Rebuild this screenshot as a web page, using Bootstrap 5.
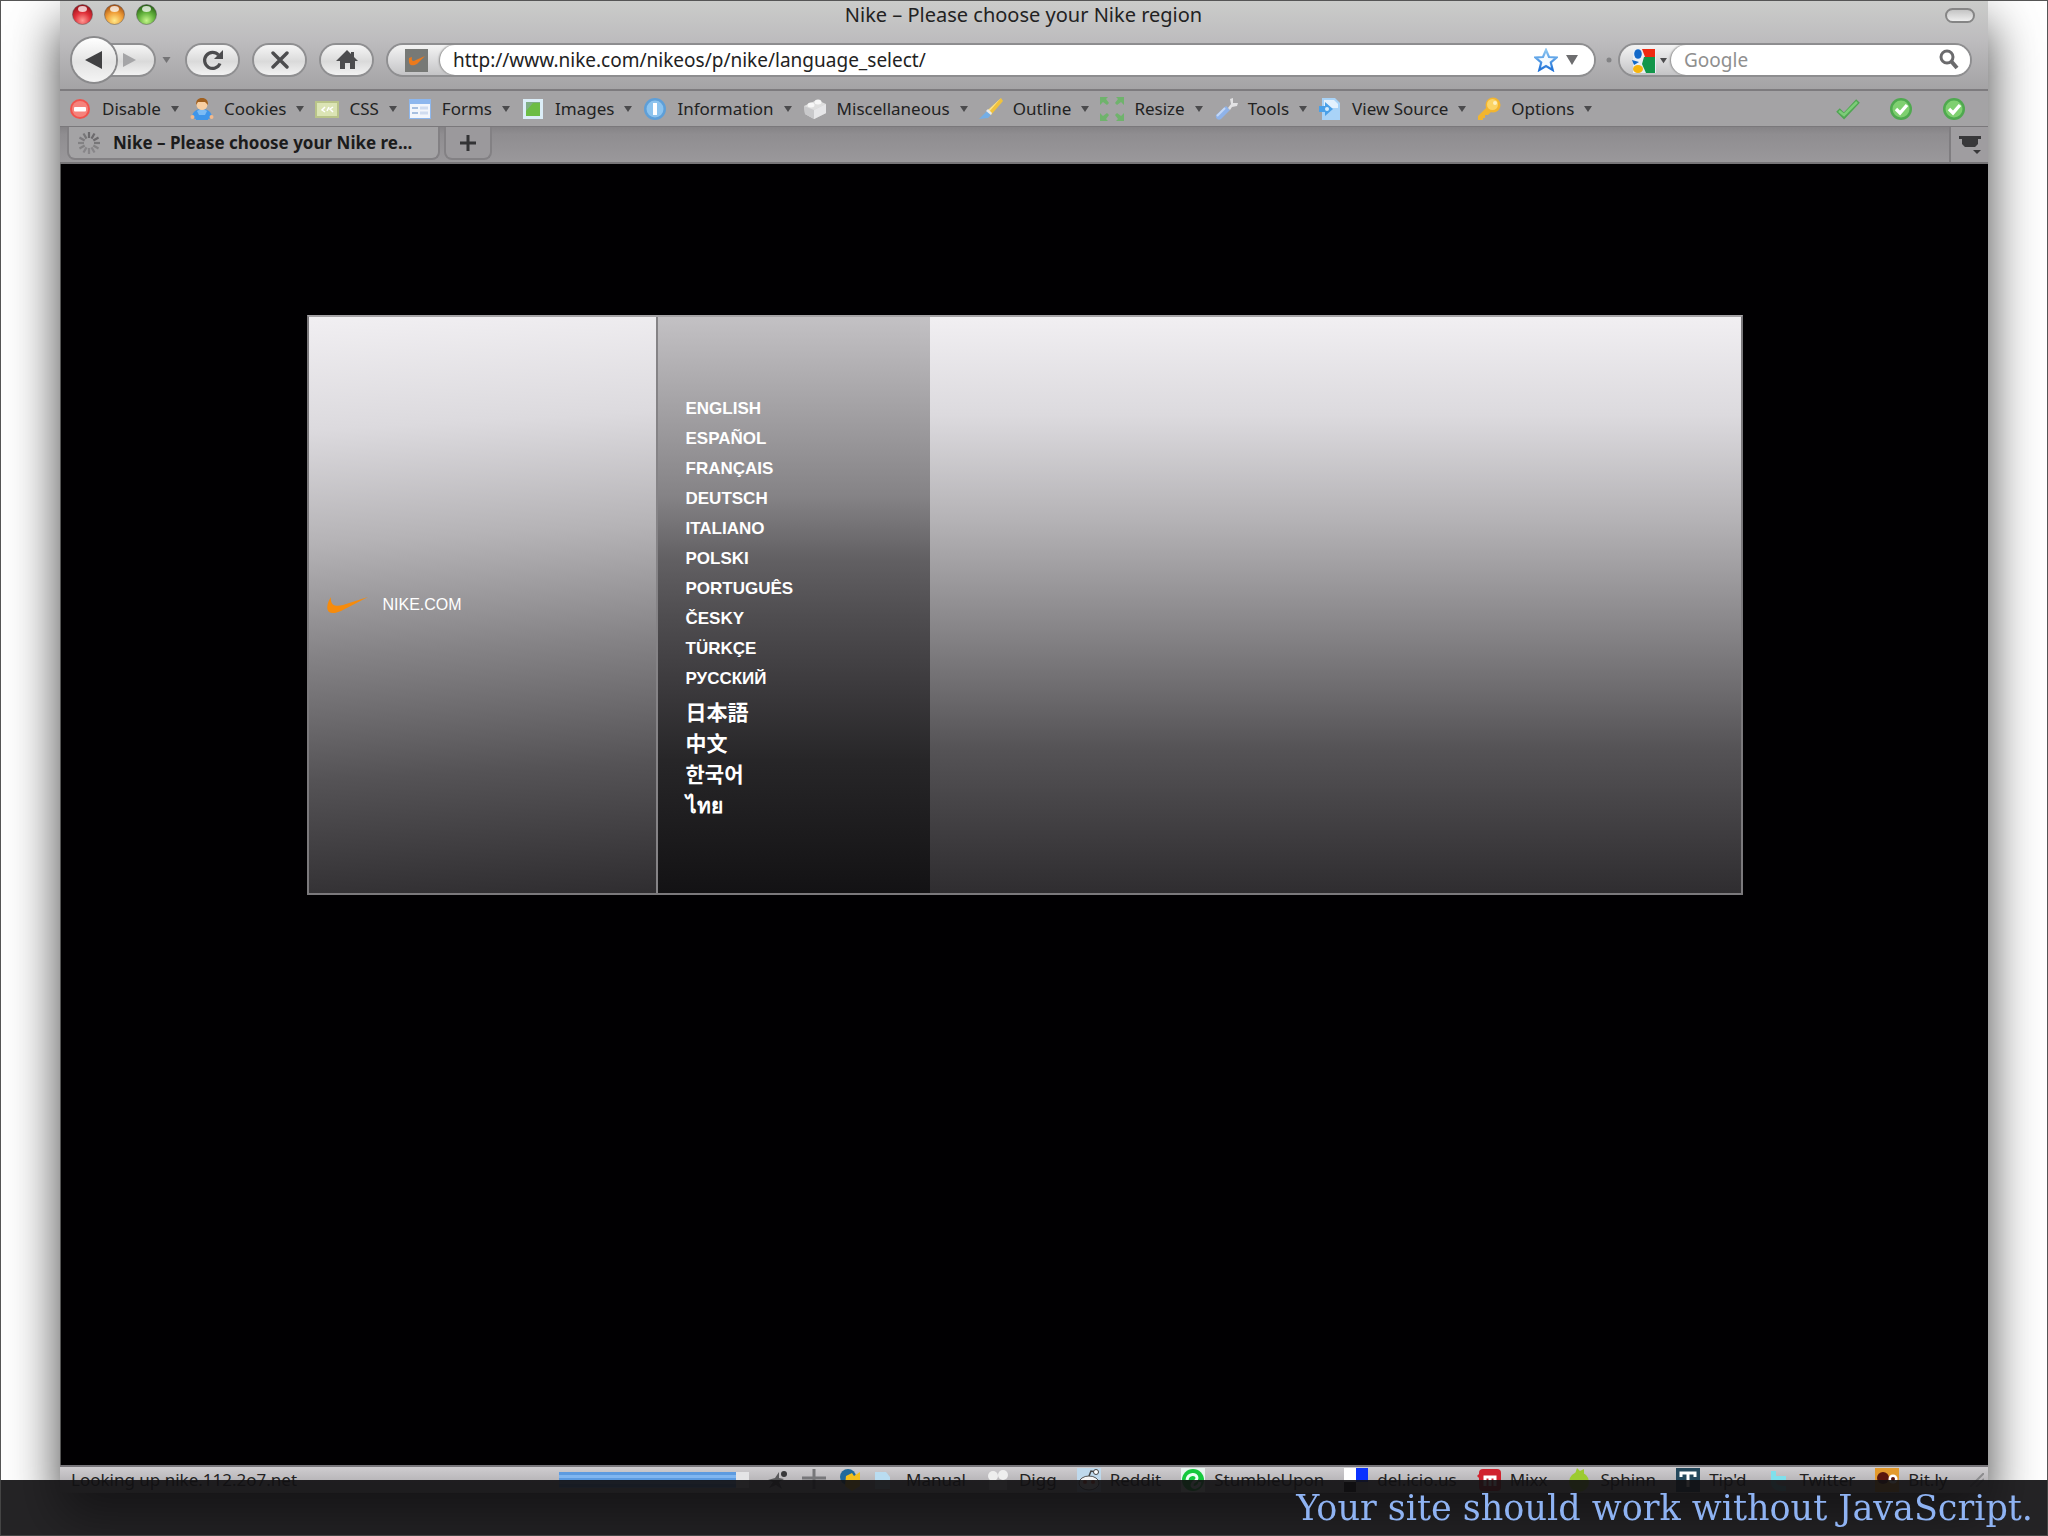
<!DOCTYPE html>
<html lang="en">
<head>
<meta charset="utf-8">
<meta name="viewport" content="width=device-width, initial-scale=1">
<title>Nike – Please choose your Nike region</title>
<link rel="stylesheet" href="https://cdn.jsdelivr.net/npm/bootstrap@5.3.0/dist/css/bootstrap.min.css">
<style>
  body { font-family: "Noto Sans", "Noto Sans CJK JP", sans-serif; background: #fff; color: #222; }
  button { font: inherit; color: inherit; background: none; border: 0; padding: 0; }
  svg { display: block; flex: none; }

  .slide { border: 1px solid #555; padding: 0 59px 42px; }
  .browser { box-shadow: 0 24px 48px rgba(0,0,0,.75); background: #a4a3a5; }

  /* title and navigation */
  .chrome { background: linear-gradient(#cbccca, #bdbcbe 45%, #a4a3a5); border-bottom: 2px solid #7d7b7e; }
  .titlebar { height: 28px; padding: 0 13px 0 12px; font-size: 20px; line-height: 28px; }
  .side-slot { width: 96px; }
  .zoom-pill { width: 30px; height: 15px; border-radius: 8px; border: 2px solid #858585; background: linear-gradient(#c4c4c4, #eee); }
  .navrow { height: 60px; padding: 2px 18px 0 12px; }
  .pill { height: 30px; border-radius: 15px; background: linear-gradient(#f6f6f6, #dadada 55%, #f2f2f2); box-shadow: 0 0 0 2px #8f8f91; }
  .round-back { width: 44px; height: 44px; border-radius: 22px; background: linear-gradient(#fff, #e3e3e3 55%, #f4f4f4); box-shadow: 0 0 0 2px #8a8a8c; z-index: 1; }
  .fwd { width: 50px; margin-left: -12px; border-radius: 0 15px 15px 0; }
  .nav-pill { width: 51px; }
  .field { height: 30px; border-radius: 15px; background: linear-gradient(#f4f4f4, #c4c4c6); box-shadow: 0 0 0 2px #8f8f91; }
  .address { margin-right: 12px; }
  .site-icon { margin: 4px 12px 3px 17px; }
  .field-inner { background: #fff; border-radius: 15px; box-shadow: -1px 0 2px #888; padding-left: 13px; }
  .field input { border: 0; outline: 0; background: none; height: 28px; padding: 0; font-size: 19px; line-height: 28px; color: #222; }
  .field input::placeholder { color: #8f8f8f; opacity: 1; }
  .search { width: 350px; }

  /* developer toolbar */
  .devbar { height: 35px; padding: 0 22px 0 8px; font-size: 17px; line-height: 24px; }
  .tool { gap: 10px; margin-right: 11px; white-space: nowrap; }
  .tool:last-of-type { margin-right: 0; }
  .tick-set { gap: 29px; }

  /* tabs */
  .tabstrip { height: 38px; background: linear-gradient(#858386, #8f8d90 20%, #9a989b); border-top: 1px solid #7a787b; border-bottom: 2px solid #777578; padding-left: 7px; }
  .tab-item { height: 33px; background: #a4a3a5; border: 2px solid #838184; border-top: 0; border-radius: 0 0 8px 8px; font-size: 17px; font-weight: 700; }
  .tab-main { width: 373px; padding-left: 8px; gap: 12px; margin-right: 4px; color: #1c1c1c; }
  .tab-plus { width: 48px; background: #9b999c; }
  .tab-menu { width: 39px; border-left: 2px solid #7f7d80; background: #9f9da0; }

  /* page */
  .page-view { background: #010002; padding: 151px 16px 0; border-left: 1px solid #555; }
  .region-panel { max-width: 1436px; border: 2px solid #7b797c; border-top-color: #a5a3a6; background: linear-gradient(#f1eff2 0%, #dcdade 17%, #b5b3b6 35%, #858386 55%, #555356 75%, #2f2d30 100%); font-family: "Liberation Sans", "Noto Sans CJK JP", sans-serif; color: #fff; }
  .brand-col { width: 349px; border-right: 2px solid #858386; background: linear-gradient(177deg, #f1eff2 0%, #dcdade 19%, #b5b3b6 38%, #858386 57%, #555356 78%, #2f2d30 100%); font-size: 16px; padding-left: 18px; gap: 15px; }
  .brand-col a, .lang-col a { color: inherit; text-decoration: none; }
  .lang-col { width: 272px; background: linear-gradient(#c3c1c4 0%, #a7a5a8 14%, #858386 31%, #626063 42%, #4f4d50 52%, #3c3a3d 64%, #272628 77%, #131214 100%); padding: 77px 0 72px 28px; font-size: 17px; font-weight: 700; line-height: 30px; }
  .lang-col .wide-script { font-size: 21px; line-height: 31px; }
  .lang-col .script-start { margin-top: 3px; }

  /* status */
  .statusbar { height: 28px; background: linear-gradient(#cfcdd0, #b9b7ba 50%, #aaa); border-top: 2px solid #77757a; font-size: 17px; line-height: 26px; padding: 0 4px 0 11px; }
  .loadbar { width: 190px; height: 16px; border-radius: 0; background: #e4e4e6; }
  .loadbar .progress-bar { background: repeating-linear-gradient(#5d9be0 0 3px, #80b6f0 3px 6px); }
  .status-left { width: 488px; }
  .mark-link { gap: 9px; color: #222; text-decoration: none; white-space: nowrap; }
  .marks { gap: 20px; }
  .mini-icons { gap: 13px; padding: 0 16px 0 18px; }

  .slide-caption { min-height: 56px; background: rgba(17,16,18,.92); border: 1px solid #444; border-top: 0; color: #8fb3f3; font-family: "DejaVu Serif", serif; font-size: 35px; line-height: 40px; padding: 8px 14px 0; text-align: right; }
</style>
<script src="https://cdn.jsdelivr.net/npm/bootstrap@5.3.0/dist/js/bootstrap.bundle.min.js"></script>
</head>
<body>
<svg width="0" height="0" class="position-absolute" aria-hidden="true">
  <defs>
    <radialGradient id="gr" cx=".5" cy=".8" r=".8"><stop offset="0" stop-color="#ff9a94"/><stop offset=".5" stop-color="#e0303a"/><stop offset="1" stop-color="#8e1018"/></radialGradient>
    <radialGradient id="gy" cx=".5" cy=".8" r=".8"><stop offset="0" stop-color="#ffe98a"/><stop offset=".5" stop-color="#f0a03a"/><stop offset="1" stop-color="#a04a10"/></radialGradient>
    <radialGradient id="gg" cx=".5" cy=".8" r=".8"><stop offset="0" stop-color="#c4f58a"/><stop offset=".5" stop-color="#63b23c"/><stop offset="1" stop-color="#235c12"/></radialGradient>
    <linearGradient id="blue" x2="0" y2="1"><stop offset="0" stop-color="#8cc6f2"/><stop offset="1" stop-color="#1f72d8"/></linearGradient>
    <symbol id="caret" viewBox="0 0 8 8"><path d="M0 1h8L4 7z" fill="#4b4b4d"/></symbol>
    <symbol id="disc-tick" viewBox="0 0 24 24"><circle cx="12" cy="12" r="11" fill="#4fa94f"/><circle cx="12" cy="12" r="8.5" fill="#7fd070"/><path d="M7 12l4 4 7-8" fill="none" stroke="#fff" stroke-width="3.4"/></symbol>
  </defs>
</svg>

<main class="slide d-flex flex-column min-vh-100 overflow-hidden">
  <div class="browser d-flex flex-column flex-grow-1">
    <header class="chrome">
      <div class="titlebar d-flex align-items-center justify-content-between">
        <svg class="side-slot" width="96" height="24" viewBox="0 0 96 24" role="img" aria-label="Window controls">
          <g stroke="#555" stroke-opacity=".5"><circle cx="10.500" cy="11.500" r="10" fill="url(#gr)"/><circle cx="42.500" cy="11.500" r="10" fill="url(#gy)"/><circle cx="74.500" cy="11.500" r="10" fill="url(#gg)"/></g>
          <g fill="#fff" fill-opacity=".75"><ellipse cx="10.500" cy="6" rx="4.500" ry="3"/><ellipse cx="42.500" cy="6" rx="4.500" ry="3"/><ellipse cx="74.500" cy="6" rx="4.500" ry="3"/></g>
        </svg>
        <span>Nike – Please choose your Nike region</span>
        <span class="side-slot d-flex justify-content-end"><button class="zoom-pill" aria-label="Toggle toolbar"></button></span>
      </div>
      <div class="navrow d-flex align-items-center">
        <button class="round-back position-relative d-flex align-items-center justify-content-center" aria-label="Back"><svg width="18" height="18" viewBox="0 0 18 18"><path d="M0 9L17 0v18z" fill="#414143"/></svg></button>
        <button class="pill fwd d-flex align-items-center justify-content-center" aria-label="Forward"><svg width="14" height="16" viewBox="0 0 14 16"><path d="M14 8L1 1v14z" fill="#a5a5a7"/></svg></button>
        <button class="px-2" aria-label="Recent pages"><svg width="9" height="8"><use href="#caret" opacity=".6"/></svg></button>
        <button class="pill nav-pill ms-2 me-3 d-flex align-items-center justify-content-center" aria-label="Reload"><svg width="22" height="22" viewBox="0 0 22 22"><path d="M18 14.500A8 8 0 1 1 16.500 6" fill="none" stroke="#4c4c4e" stroke-width="3.200"/><path d="M21 1v9h-9z" fill="#4c4c4e"/></svg></button>
        <button class="pill nav-pill d-flex align-items-center justify-content-center" aria-label="Stop"><svg width="18" height="18" viewBox="0 0 18 18"><path d="M2 2l14 14M16 2L2 16" stroke="#4c4c4e" stroke-width="3.400" stroke-linecap="round"/></svg></button>
        <button class="pill nav-pill ms-3 d-flex align-items-center justify-content-center" aria-label="Home"><svg width="22" height="20" viewBox="0 0 22 20"><path d="M11 0l4 4V2h3v5l4 4h-3v8h-5v-6H9v6H4v-8H0z" fill="#4c4c4e"/></svg></button>

        <div class="field address d-flex flex-grow-1 ms-3">
          <svg class="site-icon" width="23" height="23" viewBox="0 0 23 23"><rect width="23" height="23" fill="#777976"/><path d="M4 9c-1 9 4 8 8 6l8-8-9 4c-3 2-5 1-4-3z" fill="#ec7a1c"/></svg>
          <div class="field-inner d-flex flex-grow-1 align-items-center pe-3">
            <input class="flex-grow-1" type="text" aria-label="Address" value="http://www.nike.com/nikeos/p/nike/language_select/">
            <svg width="24" height="24" viewBox="0 0 24 24"><path d="M12 2l3 7 7.500.500-5.700 5 1.900 7.500L12 18l-6.700 4 1.900-7.500-5.700-5L9 9z" fill="#f4faff" stroke="url(#blue)" stroke-width="2.200"/></svg>
            <button class="ms-2" aria-label="History"><svg width="12" height="10" viewBox="0 0 12 10"><path d="M0 0h12L6 10z" fill="#6d6d6f"/></svg></button>
          </div>
        </div>
        <svg class="me-2" width="6" height="6" viewBox="0 0 6 6"><circle cx="3" cy="3" r="2.500" fill="#838385"/></svg>
        <div class="field search d-flex">
          <svg class="ms-2 mt-1" width="28" height="24" viewBox="0 0 28 24"><rect x="5" width="23" height="24" fill="#e9eef5"/><path d="M14 0h13v8H17z" fill="#ee2a12"/><path d="M16 8h11v16H18l-4-9z" fill="#12964a"/><ellipse cx="10" cy="5" rx="3.800" ry="4.800" fill="#1268c8"/><path d="M4 11l7 2-5 3z" fill="#1268c8"/><ellipse cx="10" cy="20" rx="5" ry="4" fill="#f7b50d"/></svg>
          <button class="ms-1 me-1" aria-label="Choose search engine"><svg width="7" height="7"><use href="#caret"/></svg></button>
          <div class="field-inner d-flex flex-grow-1 align-items-center pe-2">
            <input class="w-100" type="text" aria-label="Search" placeholder="Google">
            <svg width="24" height="22" viewBox="0 0 24 22"><circle cx="9" cy="8" r="6" fill="none" stroke="#6b6b6d" stroke-width="3"/><path d="M13 12l6 7" stroke="#6b6b6d" stroke-width="4"/></svg>
          </div>
        </div>
      </div>
    </header>

    <nav class="devbar d-flex align-items-center" aria-label="Developer toolbar">
      <button class="tool d-flex align-items-center"><svg width="24" height="24" viewBox="0 0 24 24"><circle cx="12" cy="12" r="10" fill="#f0524c"/><circle cx="12" cy="12" r="8" fill="#f5837c"/><rect x="6" y="10" width="12" height="4.500" rx="1" fill="#fff"/></svg>Disable<svg width="8" height="8"><use href="#caret"/></svg></button>
      <button class="tool d-flex align-items-center"><svg width="24" height="24" viewBox="0 0 24 24"><path d="M2 21c0-6 4-9 10-9s10 3 10 9l-4 1v1H6v-1z" fill="#3f96ea"/><path d="M7 14c3-2 7-2 10 0l-2 4H9z" fill="#7cbcf5"/><circle cx="2.500" cy="20" r="2" fill="#f4b98a"/><circle cx="21.500" cy="20" r="2" fill="#f4b98a"/><circle cx="12" cy="7.500" r="5.500" fill="#f8cfa2"/><path d="M6 8c0-5 2-7 6-7s6 2 6 7l-3-3-7 0z" fill="#a0601f"/></svg>Cookies<svg width="8" height="8"><use href="#caret"/></svg></button>
      <button class="tool d-flex align-items-center"><svg width="24" height="24" viewBox="0 0 24 24"><rect y="4" width="24" height="17" fill="#b9c489"/><rect x="2" y="6" width="20" height="13" fill="#dbe4b4"/><path d="M10 10l-3 3 3 2M14 10l-2 4M18 10l-3 2 3 3" fill="none" stroke="#fff" stroke-width="1.500"/></svg>CSS<svg width="8" height="8"><use href="#caret"/></svg></button>
      <button class="tool d-flex align-items-center"><svg width="24" height="24" viewBox="0 0 24 24"><rect x="1" y="2" width="22" height="20" fill="#8db7ee"/><rect x="2" y="7" width="20" height="14" fill="#f2f6fc"/><path d="M4 11h6M4 16h6" stroke="#a6bfe0" stroke-width="2"/><path d="M12 11h8M12 16h8" stroke="#cfdcf0" stroke-width="3"/></svg>Forms<svg width="8" height="8"><use href="#caret"/></svg></button>
      <button class="tool d-flex align-items-center"><svg width="24" height="24" viewBox="0 0 24 24"><rect x="2" y="2" width="20" height="20" fill="#dceef8"/><rect x="5" y="5" width="14" height="14" fill="#7fae86"/><path d="M5 19V14l7-8h7v13z" fill="#6cbd45"/></svg>Images<svg width="8" height="8"><use href="#caret"/></svg></button>
      <button class="tool d-flex align-items-center"><svg width="24" height="24" viewBox="0 0 24 24"><circle cx="12" cy="12" r="11" fill="#5e9fd8"/><circle cx="12" cy="12" r="8.500" fill="#8cc3ee"/><path d="M12 6v12" stroke="#fff" stroke-width="4"/></svg>Information<svg width="8" height="8"><use href="#caret"/></svg></button>
      <button class="tool d-flex align-items-center"><svg width="24" height="24" viewBox="0 0 24 24"><path d="M1 9L14 3l9 4v9l-12 6-9-5z" fill="#dedede"/><path d="M1 9l10 4 12-6v9l-12 6-9-5z" fill="#c9c9cb"/><path d="M11 13l12-6v9l-12 6z" fill="#e6e6e8"/><ellipse cx="8" cy="8" rx="3.500" ry="2.500" fill="#f7f7f7"/><ellipse cx="15" cy="5" rx="3.500" ry="2.500" fill="#f7f7f7"/></svg>Miscellaneous<svg width="8" height="8"><use href="#caret"/></svg></button>
      <button class="tool d-flex align-items-center"><svg width="24" height="24" viewBox="0 0 24 24"><path d="M22 1l2 3L12 18l-4-4z" fill="#f0c23c"/><path d="M22 1L8 14l2 1z" fill="#f9e28a"/><path d="M8 14l4 4-3 3-9 1z" fill="#74aee6"/><path d="M7 14l5 4 1-2-4-4z" fill="#e9e9ea"/></svg>Outline<svg width="8" height="8"><use href="#caret"/></svg></button>
      <button class="tool d-flex align-items-center"><svg width="24" height="24" viewBox="0 0 24 24"><path d="M0 0h8L6 2l3 4-2 2-4-3-3 3zM24 0h-8l2 2-3 4 2 2 4-3 3 3zM0 24h8l-2-2 3-4-2-2-4 3-3-3zM24 24h-8l2-2-3-4 2-2 4 3 3-3z" fill="#6fb36c"/></svg>Resize<svg width="8" height="8"><use href="#caret"/></svg></button>
      <button class="tool d-flex align-items-center"><svg width="24" height="24" viewBox="0 0 24 24"><path d="M12 9l4 4-9 9c-3 2-6-1-5-4z" fill="#8fb3ea"/><path d="M11 11L3 19" stroke="#c4d8f6" stroke-width="2"/><path d="M14 11l3-4-1-5 3-1v5h5l-1 3-5 1-2 3z" fill="#e2e2e4"/></svg>Tools<svg width="8" height="8"><use href="#caret"/></svg></button>
      <button class="tool d-flex align-items-center"><svg width="24" height="24" viewBox="0 0 24 24"><path d="M4 1h13l5 5v17H4z" fill="#a9d3f7"/><path d="M6 3h10l4 4v4H6z" fill="#e3f1fd"/><path d="M1 9h6V5l8 7-8 7v-4H1z" fill="#4aa0e8"/><circle cx="9" cy="12" r="2" fill="#d6ecfd"/></svg>View Source<svg width="8" height="8"><use href="#caret"/></svg></button>
      <button class="tool d-flex align-items-center"><svg width="24" height="24" viewBox="0 0 24 24"><path d="M10 10L1 19v4h5v-2h2v-3h3l3-3z" fill="#f3b52f"/><circle cx="16" cy="8" r="7.500" fill="#f3b52f"/><circle cx="15.500" cy="7.500" r="5.500" fill="#fbd465"/><circle cx="18" cy="6" r="2" fill="#fdf0c0"/></svg>Options<svg width="8" height="8"><use href="#caret"/></svg></button>
      <div class="tick-set d-flex ms-auto">
        <svg width="24" height="24" viewBox="0 0 24 24"><path d="M2 13l6 6L22 4" fill="none" stroke="#4fa552" stroke-width="5"/><path d="M3 14l5 4L21 5" fill="none" stroke="#7ccc78" stroke-width="2.500"/></svg>
        <svg width="24" height="24"><use href="#disc-tick"/></svg>
        <svg width="24" height="24"><use href="#disc-tick"/></svg>
      </div>
    </nav>

    <div class="tabstrip d-flex">
      <button class="tab-item tab-main d-flex align-items-center">
        <svg width="24" height="24" viewBox="0 0 24 24"><g fill="none" stroke="#6c6a6d" stroke-width="2.200"><path d="M12 1v6"/><path d="M12 1v6" transform="rotate(30 12 12)"/><path d="M12 1v6" transform="rotate(60 12 12)"/><path d="M12 1v6" transform="rotate(90 12 12)" opacity=".8"/><path d="M12 1v6" transform="rotate(120 12 12)" opacity=".6"/><path d="M12 1v6" transform="rotate(150 12 12)" opacity=".5"/><path d="M12 1v6" transform="rotate(180 12 12)" opacity=".5"/><path d="M12 1v6" transform="rotate(210 12 12)" opacity=".5"/><path d="M12 1v6" transform="rotate(240 12 12)" opacity=".6"/><path d="M12 1v6" transform="rotate(270 12 12)" opacity=".6"/><path d="M12 1v6" transform="rotate(300 12 12)" opacity=".7"/><path d="M12 1v6" transform="rotate(330 12 12)" opacity=".8"/></g></svg>
        <span>Nike – Please choose your Nike re...</span>
      </button>
      <button class="tab-item tab-plus d-flex align-items-center justify-content-center" aria-label="New tab"><svg width="16" height="16" viewBox="0 0 16 16"><path d="M8 0v16M0 8h16" stroke="#333335" stroke-width="3"/></svg></button>
      <button class="tab-menu ms-auto d-flex align-items-center justify-content-center" aria-label="List all tabs"><svg width="22" height="20" viewBox="0 0 22 20"><path d="M0 1h22v3h-3v5l-3 3H6L3 9V4H0z" fill="#38383a"/><path d="M14 15h8l-4 4z" fill="#38383a"/></svg></button>
    </div>

    <div class="page-view flex-grow-1">
      <section class="region-panel d-flex mx-auto">
        <div class="brand-col d-flex align-items-center flex-shrink-0">
          <svg width="41" height="18" viewBox="0 0 41 18"><path d="M4 1C0 7-1 13 2 16c3 2 7 1 12-1L41 1 16 9c-8 2-13 0-12-8z" fill="#f68b0c"/></svg>
          <a href="#">NIKE.COM</a>
        </div>
        <ul class="lang-col list-unstyled mb-0 flex-shrink-0">
          <li><a href="#">ENGLISH</a></li>
          <li><a href="#">ESPAÑOL</a></li>
          <li><a href="#">FRANÇAIS</a></li>
          <li><a href="#">DEUTSCH</a></li>
          <li><a href="#">ITALIANO</a></li>
          <li><a href="#">POLSKI</a></li>
          <li><a href="#">PORTUGUÊS</a></li>
          <li><a href="#">ČESKY</a></li>
          <li><a href="#">TÜRKÇE</a></li>
          <li><a href="#">РУССКИЙ</a></li>
          <li class="wide-script script-start" lang="ja"><a href="#">日本語</a></li>
          <li class="wide-script" lang="zh"><a href="#">中文</a></li>
          <li class="wide-script" lang="ko"><a href="#">한국어</a></li>
          <li class="wide-script" lang="th"><a href="#">ไทย</a></li>
        </ul>
      </section>
    </div>

    <footer class="statusbar d-flex align-items-center">
      <span class="status-left">Looking up nike.112.2o7.net</span>
      <div class="progress loadbar" role="progressbar" aria-label="Page loading" aria-valuenow="93" aria-valuemin="0" aria-valuemax="100"><div class="progress-bar" style="width:93%"></div></div>
      <div class="mini-icons d-flex">
        <svg width="22" height="22" viewBox="0 0 22 22"><path d="M12 3l0 6 5 1-5 3 3 7-6-4-7 3 4-6-5-2 7-2z" fill="#5a5a5c"/><circle cx="17" cy="5" r="3" fill="#38383a"/></svg>
        <svg width="24" height="22" viewBox="0 0 24 22"><path d="M12 0v20M0 9h24" stroke="#77777a" stroke-width="3"/></svg>
        <svg width="22" height="22" viewBox="0 0 22 22"><circle cx="9" cy="8" r="8" fill="#1f6a9c"/><path d="M7 7l6-3 2 3 6-4v14l-8 5-7-5z" fill="#f3bf1c"/></svg>
        <svg width="16" height="22" viewBox="0 0 16 22"><path d="M1 3h11l4 5v12H1z" fill="#b9dcf0"/></svg>
      </div>
      <div class="marks d-flex">
        <a class="mark-link" href="#">Manual</a>
        <a class="mark-link d-flex align-items-center" href="#"><svg width="24" height="24" viewBox="0 0 24 24"><circle cx="7" cy="8" r="5" fill="#eee"/><circle cx="17" cy="7" r="5" fill="#eee"/><path d="M3 12h18v10H3z" fill="#ddd"/></svg>Digg</a>
        <a class="mark-link d-flex align-items-center" href="#"><svg width="24" height="24" viewBox="0 0 24 24"><rect width="24" height="24" fill="#bfd9ec"/><ellipse cx="12" cy="15" rx="10" ry="7" fill="#f4f4f4" stroke="#555"/><path d="M12 8l2-5 5 1" fill="none" stroke="#444" stroke-width="1.500"/><circle cx="19" cy="4" r="2.500" fill="#fff" stroke="#444"/><circle cx="8" cy="14" r="2" fill="#e5532d"/><circle cx="16" cy="14" r="2" fill="#e5532d"/></svg>Reddit</a>
        <a class="mark-link d-flex align-items-center" href="#"><svg width="24" height="24" viewBox="0 0 24 24"><rect width="24" height="24" fill="#e8f4f0"/><circle cx="12" cy="12" r="11" fill="#14c83c"/><path d="M6 12c1-7 10-7 10-2 0 4-5 3-5 7s7 3 8-3" fill="none" stroke="#e9fff4" stroke-width="3"/></svg>StumbleUpon</a>
        <a class="mark-link d-flex align-items-center" href="#"><svg width="24" height="24" viewBox="0 0 24 24"><path d="M0 0h12v14H0z" fill="#fff"/><path d="M12 0h12v14H12z" fill="#0a32ff"/><path d="M0 14h12v10H0z" fill="#000"/><path d="M12 14h12v10H12z" fill="#aaa"/></svg>del.icio.us</a>
        <a class="mark-link d-flex align-items-center" href="#"><svg width="24" height="24" viewBox="0 0 24 24"><rect x="2" y="1" width="22" height="22" rx="4" fill="#d0222e"/><path d="M3 5l-3 3 3 3z" fill="#d0222e"/><path d="M8 18V9h10v9M13 9v9" fill="none" stroke="#fff" stroke-width="3"/></svg>Mixx</a>
        <a class="mark-link d-flex align-items-center" href="#"><svg width="24" height="24" viewBox="0 0 24 24"><circle cx="12" cy="14" r="10" fill="#9ccb30"/><path d="M8 6l2-6 3 3 4-2v6z" fill="#9ccb30"/></svg>Sphinn</a>
        <a class="mark-link d-flex align-items-center" href="#"><svg width="24" height="24" viewBox="0 0 24 24"><rect width="24" height="24" fill="#24485c"/><path d="M5 9V5h14v4M12 5v14" fill="none" stroke="#fff" stroke-width="3"/></svg>Tip'd</a>
        <a class="mark-link d-flex align-items-center" href="#"><svg width="24" height="24" viewBox="0 0 24 24"><path d="M4 3h5v5h10v5H9c0 4 3 5 10 5v5C8 24 4 20 4 14z" fill="#7fe0ec"/></svg>Twitter</a>
        <a class="mark-link d-flex align-items-center" href="#"><svg width="24" height="24" viewBox="0 0 24 24"><rect width="24" height="24" fill="#e39a2c"/><circle cx="8" cy="10" r="6" fill="#5a160e"/><circle cx="18" cy="11" r="4.500" fill="#fff"/><circle cx="18" cy="11" r="2" fill="#5a160e"/></svg>Bit.ly</a>
      </div>
      <svg class="ms-auto" width="14" height="14" viewBox="0 0 14 14"><path d="M0 14L14 0M6 14l8-8" stroke="#8c8c8e" stroke-width="2"/></svg>
    </footer>
  </div>
</main>
<div class="slide-caption fixed-bottom">Your site should work without JavaScript.</div>
</body>
</html>
